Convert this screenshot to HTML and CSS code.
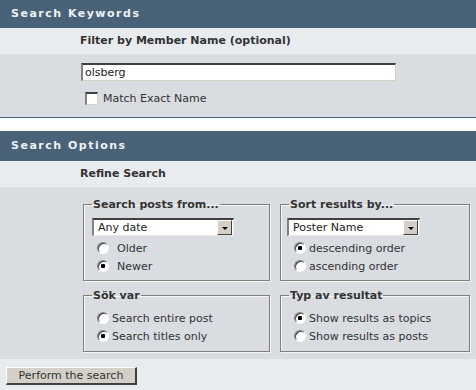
FILE: index.html
```html
<!DOCTYPE html>
<html lang="en">
<head>
    <meta charset="UTF-8">
    <title>Search</title>
    <link rel="stylesheet" href="styles.css">
</head>
<body>
    <div class="panel panel-first">
        <div class="panel-title panel-title-top">Search Keywords</div>
        <div class="row-head">Filter by Member Name (optional)</div>
        <div class="row-body">
            <input type="text" class="text-input" value="olsberg">
            <label class="check">
                <input type="checkbox">
                <span>Match Exact Name</span>
            </label>
        </div>
    </div>

    <div class="panel">
        <div class="panel-title">Search Options</div>
        <div class="row-head">Refine Search</div>
        <div class="options">
            <fieldset class="box box-tall">
                <legend>Search posts from...</legend>
                <div class="select select-date">
                    <select>
                        <option>Any date</option>
                    </select>
                    <span class="select-btn"></span>
                </div>
                <label class="radio radio-spaced"><input type="radio" name="when"><span>Older</span></label>
                <label class="radio radio-spaced"><input type="radio" name="when" checked><span>Newer</span></label>
            </fieldset>
            <fieldset class="box box-tall">
                <legend>Sort results by...</legend>
                <div class="select select-sort">
                    <select>
                        <option>Poster Name</option>
                    </select>
                    <span class="select-btn"></span>
                </div>
                <label class="radio"><input type="radio" name="order" checked><span>descending order</span></label>
                <label class="radio"><input type="radio" name="order"><span>ascending order</span></label>
            </fieldset>
            <fieldset class="box">
                <legend>Sök var</legend>
                <label class="radio"><input type="radio" name="where"><span>Search entire post</span></label>
                <label class="radio"><input type="radio" name="where" checked><span>Search titles only</span></label>
            </fieldset>
            <fieldset class="box">
                <legend>Typ av resultat</legend>
                <label class="radio"><input type="radio" name="show" checked><span>Show results as topics</span></label>
                <label class="radio"><input type="radio" name="show"><span>Show results as posts</span></label>
            </fieldset>
        </div>
        <div class="panel-foot">
            <button type="button" class="btn">Perform the search</button>
        </div>
    </div>
</body>
</html>
```

FILE: styles.css
```css
* {
    box-sizing: border-box;
}
body {
    margin: 0;
    background-color: #fff;
    font-family: "DejaVu Sans", Verdana, sans-serif;
    font-size: 11px;
    color: #333;
}
.panel-first {
    border-bottom: 1px solid #4a6278;
    margin-bottom: 13px;
}
.panel-title {
    height: 30px;
    line-height: 30px;
    padding-left: 11px;
    background-color: #4a6278;
    color: #eef1f4;
    font-weight: bold;
    letter-spacing: 1.5px;
}
.panel-title-top {
    height: 28px;
    line-height: 28px;
}
.row-head {
    height: 26px;
    line-height: 26px;
    padding-left: 80px;
    background-color: #e9ecef;
    font-weight: bold;
}
.row-body {
    background-color: #d9dce1;
    padding: 9px 0 12px 81px;
}
.text-input {
    display: block;
    width: 315px;
    height: 18px;
    margin: 0;
    padding: 0 2px;
    font: inherit;
    color: #222;
    background: #fff;
    border-style: solid;
    border-width: 2px 1px 1px 2px;
    border-color: #404040 #d4d0c8 #d4d0c8 #808080;
    outline: none;
}
.check {
    display: flex;
    align-items: center;
    gap: 5px;
    margin: 11px 0 0 4px;
    height: 13px;
}
.check input {
    appearance: none;
    width: 13px;
    height: 13px;
    margin: 0;
    background: #fff;
    border-style: solid;
    border-width: 2px 1px 1px 2px;
    border-color: #404040 #d4d0c8 #d4d0c8 #808080;
}
.options {
    display: grid;
    grid-template-columns: 187px 190px;
    column-gap: 10px;
    row-gap: 8px;
    padding: 11px 6px 7px 83px;
    background-color: #d9dce1;
}
.box {
    margin: 0;
    padding: 7px 8px 6px 8px;
    border: 1px solid #7f7f7f;
    box-shadow: inset 1px 1px 0 #f5f5f5, 1px 1px 0 #f5f5f5;
}
.box legend {
    padding: 0 1px;
    font-weight: bold;
    color: #333;
}
.box-tall {
    padding-top: 7px;
    padding-bottom: 5px;
}
.select {
    display: flex;
    height: 18px;
    margin-bottom: 3px;
    background: #fff;
    border-style: solid;
    border-width: 2px 1px 1px 2px;
    border-color: #404040 #e8e6e0 #e8e6e0 #808080;
}
.select-date {
    width: 142px;
}
.select-sort {
    width: 133px;
    margin-left: -2px;
}
.select select {
    appearance: none;
    flex: 1;
    min-width: 0;
    border: none;
    background: transparent;
    font: inherit;
    color: #222;
    padding: 0 0 0 4px;
    outline: none;
}
.select-btn {
    width: 15px;
    height: 15px;
    margin: 0 1px 0 0;
    background-color: #d4d0c8;
    border-style: solid;
    border-width: 1px;
    border-color: #fff #404040 #404040 #fff;
    display: flex;
    align-items: center;
    justify-content: center;
}
.select-btn::after {
    content: "";
    border-left: 3px solid transparent;
    border-right: 3px solid transparent;
    border-top: 3px solid #000;
    margin-top: 1px;
}
.radio {
    display: flex;
    align-items: center;
    height: 18px;
    gap: 3px;
    margin-left: 5px;
}
.radio-spaced {
    gap: 8px;
}
.radio input {
    appearance: none;
    width: 12px;
    height: 12px;
    margin: 0;
    border-radius: 50%;
    background: #fff;
    border: 1px solid;
    border-color: #808080 #fff #fff #808080;
    box-shadow: inset 1px 1px 0 #404040;
}
.radio input:checked {
    background: radial-gradient(circle, #000 0 2px, #fff 2.5px);
}
.panel-foot {
    background-color: #e9ecef;
    padding: 8px 6px 6px;
}
.btn {
    height: 18px;
    width: 131px;
    padding: 0;
    font: inherit;
    color: #333;
    background-color: #d4d0c8;
    border-style: solid;
    border-width: 1px 2px 2px 1px;
    border-color: #fff #404040 #404040 #fff;
}
```
